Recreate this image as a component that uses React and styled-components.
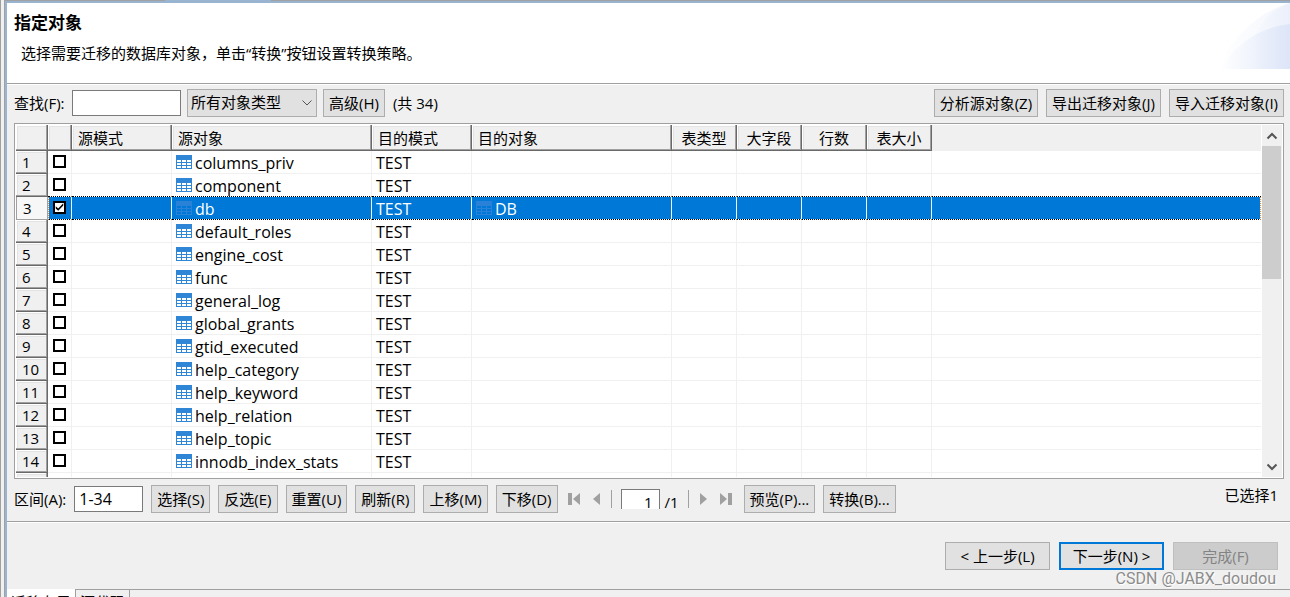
import { useState } from "react";
import styled, { createGlobalStyle, css } from "styled-components";

const names = [
  "columns_priv",
  "component",
  "db",
  "default_roles",
  "engine_cost",
  "func",
  "general_log",
  "global_grants",
  "gtid_executed",
  "help_category",
  "help_keyword",
  "help_relation",
  "help_topic",
  "innodb_index_stats",
];

const columns = [
  { label: "", width: 32 },
  { label: "", width: 24 },
  { label: "源模式", width: 100 },
  { label: "源对象", width: 200 },
  { label: "目的模式", width: 100 },
  { label: "目的对象", width: 200 },
  { label: "表类型", width: 65, center: true },
  { label: "大字段", width: 65, center: true },
  { label: "行数", width: 65, center: true },
  { label: "表大小", width: 65, center: true },
];

const TableIcon = ({ faded }) => (
  <IconSvg viewBox="0 0 16 14" aria-hidden="true">
    <rect width="16" height="14" fill={faded ? "#2a82d8" : "#2f86d6"} />
    <path
      d="M1 5h4v2H1zM6 5h4v2H6zM11 5h4v2h-4zM1 8h4v2H1zM6 8h4v2H6zM11 8h4v2h-4zM1 11h4v2H1zM6 11h4v2H6zM11 11h4v2h-4z"
      fill={faded ? "#0078d7" : "#fff"}
    />
  </IconSvg>
);

const Arrow = ({ back, bar }) => (
  <svg width="14" height="14" viewBox="0 0 14 14" aria-hidden="true">
    <g fill="#a0a0a0" transform={back ? undefined : "translate(14 0) scale(-1 1)"}>
      {bar && <path d="M1 1h4v12H1z" />}
      <path d={bar ? "M13 1v12L6 7z" : "M11 1v12L4 7z"} />
    </g>
  </svg>
);

const Chevron = ({ up }) => (
  <svg width="12" height="8" viewBox="0 0 12 8" aria-hidden="true">
    <path
      d={up ? "M1.500 6.500L6 2L10.500 6.500" : "M1.500 1.500L6 6L10.500 1.500"}
      fill="none"
      stroke="#555"
      strokeWidth="2"
    />
  </svg>
);

const Swoosh = () => (
  <SwooshSvg viewBox="0 0 72 66" aria-hidden="true">
    <defs>
      <linearGradient id="fade" x1="0" x2="1">
        <stop offset="0" stopColor="#c8d6f4" stopOpacity="0" />
        <stop offset="1" stopColor="#c8d6f4" stopOpacity="0.4" />
      </linearGradient>
      <linearGradient id="fadeLight" x1="0" x2="1">
        <stop offset="0" stopColor="#dfe7f8" stopOpacity="0" />
        <stop offset="1" stopColor="#dfe7f8" stopOpacity="0.4" />
      </linearGradient>
    </defs>
    <path d="M6 54C20 30 42 8 72 0V66H2z" fill="url(#fadeLight)" />
    <path d="M34 38C42 20 54 6 72 0V66H34z" fill="url(#fadeLight)" />
    <path d="M2 66C16 44 38 25 72 21V66z" fill="url(#fade)" />
  </SwooshSvg>
);

const App = () => {
  const [checked, setChecked] = useState([2]);

  const toggle = (i) =>
    setChecked((c) => (c.includes(i) ? c.filter((n) => n !== i) : [...c, i]));

  return (
    <>
      <GlobalStyle />
      <Frame>
        <Wizard>
          <TitleArea>
            <Title>指定对象</Title>
            <Description>
              选择需要迁移的数据库对象，单击“转换”按钮设置转换策略。
            </Description>
            <Swoosh />
          </TitleArea>

          <SearchBar>
            <Label htmlFor="find">查找(F):</Label>
            <TextInput id="find" $width={109} />
            <SelectBox>
              <Select aria-label="对象类型">
                <option>所有对象类型</option>
              </Select>
              <SelectArrow viewBox="0 0 10 6" aria-hidden="true">
                <path d="M0.500 0.500L5 5L9.500 0.500" fill="none" stroke="#555" />
              </SelectArrow>
            </SelectBox>
            <Button>高级(H)</Button>
            <Total>(共 34)</Total>
            <RightGroup>
              <Button>分析源对象(Z)</Button>
              <Button>导出迁移对象(J)</Button>
              <Button>导入迁移对象(I)</Button>
            </RightGroup>
          </SearchBar>

          <GridFrame>
            <GridView>
              <Table>
                <colgroup>
                  {columns.map((c, i) => (
                    <Col key={i} $width={c.width} />
                  ))}
                  <col />
                </colgroup>
                <thead>
                  <tr>
                    {columns.map((c, i) => (
                      <HeadCell key={i} $center={c.center}>
                        {c.label}
                      </HeadCell>
                    ))}
                    <HeadRest />
                  </tr>
                </thead>
                <tbody>
                  {names.map((name, i) => {
                    const active = i === 2;
                    return (
                      <Row key={name} $active={active} $beforeActive={i === 1}>
                        <RowHead $active={active}>{i + 1}</RowHead>
                        <CheckCell>
                          <CheckBox
                            type="checkbox"
                            aria-label={name}
                            checked={checked.includes(i)}
                            onChange={() => toggle(i)}
                          />
                        </CheckCell>
                        <Cell />
                        <Cell>
                          <TableIcon faded={active} />
                          {name}
                        </Cell>
                        <Cell>TEST</Cell>
                        <Cell>
                          {active && (
                            <>
                              <TableIcon faded />
                              DB
                            </>
                          )}
                        </Cell>
                        <Cell />
                        <Cell />
                        <Cell />
                        <Cell />
                        <LastCell />
                      </Row>
                    );
                  })}
                  {/* blank row that runs under the bottom edge */}
                  <Row>
                    <RowHead />
                    {columns.slice(1).map((c, i) => (
                      <Cell key={i} />
                    ))}
                    <LastCell />
                  </Row>
                </tbody>
              </Table>
            </GridView>
            <ScrollBar>
              <ScrollButton aria-label="向上滚动">
                <Chevron up />
              </ScrollButton>
              <Track>
                <Thumb />
              </Track>
              <ScrollButton aria-label="向下滚动">
                <Chevron />
              </ScrollButton>
            </ScrollBar>
          </GridFrame>

          <ActionBar>
            <Label htmlFor="range">区间(A):</Label>
            <TextInput id="range" $width={69} defaultValue="1-34" />
            <Button>选择(S)</Button>
            <Button>反选(E)</Button>
            <Button>重置(U)</Button>
            <Button>刷新(R)</Button>
            <Button>上移(M)</Button>
            <Button>下移(D)</Button>
            <Pager>
              <PagerButton aria-label="第一页">
                <Arrow back bar />
              </PagerButton>
              <PagerButton aria-label="前一页">
                <Arrow back />
              </PagerButton>
              <Divider />
              <PageBox>
                <PageInput aria-label="页码" defaultValue="1" />
                <PageTotal>/1</PageTotal>
              </PageBox>
              <Divider />
              <PagerButton aria-label="后一页">
                <Arrow />
              </PagerButton>
              <PagerButton aria-label="最后一页">
                <Arrow bar />
              </PagerButton>
            </Pager>
            <Button>预览(P)...</Button>
            <Button>转换(B)...</Button>
            <Selected>已选择{checked.length}</Selected>
          </ActionBar>

          <Footer>
            <WizardButton>&lt; 上一步(L)</WizardButton>
            <WizardButton $primary>下一步(N) &gt;</WizardButton>
            <WizardButton disabled>完成(F)</WizardButton>
            <Watermark>CSDN @JABX_doudou</Watermark>
          </Footer>

          <Tabs>
            <Tab $active>迁移布局</Tab>
            <Tab>源代码</Tab>
            <TabRest />
          </Tabs>
        </Wizard>
      </Frame>
    </>
  );
};

const GlobalStyle = createGlobalStyle`
  * {
    box-sizing: border-box;
  }
  body {
    margin: 0;
    overflow: hidden;
    background: #f0f0f0;
  }
  body, button, input, select {
    font-family: "Open Sans", "Noto Sans CJK SC", sans-serif;
    font-size: 15px;
    color: #000;
  }
`;

const Frame = styled.div`
  display: flex;
  height: 100vh;
  padding-left: 3px;
  border-left: 1px solid #a0a0a0;
`;

const Wizard = styled.main`
  flex: 1;
  min-width: 0;
  display: flex;
  flex-direction: column;
  padding: 3px 0 0 2px;
  border-left: 1px solid #a0a0a0;
  /* grey window edge with the blue tab above it */
  background:
    linear-gradient(#99b4d1, #99b4d1) 160px 0 / 106px 1px no-repeat,
    linear-gradient(#a0a0a0, #a0a0a0) 0 0 / 100% 1px no-repeat,
    linear-gradient(#99b4d1, #99b4d1) 0 1px / 100% 2px no-repeat,
    linear-gradient(#99b4d1, #99b4d1) 0 0 / 2px 100% no-repeat,
    #f0f0f0;
  line-height: 20px;
  white-space: nowrap;
`;

const TitleArea = styled.header`
  position: relative;
  height: 81px;
  flex: none;
  padding: 10px 7px;
  background: #fff;
  border-bottom: 1px solid #a0a0a0;
`;

const Title = styled.h1`
  margin: 0;
  font-size: 17px;
  line-height: 20px;
`;

const Description = styled.p`
  margin: 10px 0 0 7px;
`;

const SwooshSvg = styled.svg`
  position: absolute;
  top: 0;
  right: 0;
  width: 72px;
  height: 66px;
`;

const Bar = styled.div`
  display: flex;
  align-items: center;
  flex: none;
  padding: 0 6px 2px 7px;
`;

const SearchBar = styled(Bar)`
  height: 39px;
  gap: 6px;
  border-top: 1px solid #fff;
`;

const Label = styled.label`
  min-width: 52px;
`;

const Total = styled.span`
  padding-left: 2px;
`;

const TextInput = styled.input`
  width: ${(props) => props.$width}px;
  height: 26px;
  padding: 0 4px;
  border: 1px solid #7a7a7a;
  background: #fff;
  font-size: 16px;
  outline: none;
`;

const buttonFace = css`
  height: 28px;
  padding: 0 5px 2px;
  border: 1px solid #adadad;
  border-radius: 0;
  background: #e1e1e1;
`;

const Button = styled.button`
  ${buttonFace}
  flex: none;
`;

const SelectBox = styled.div`
  position: relative;
`;

const Select = styled.select`
  ${buttonFace}
  display: block;
  width: 130px;
  padding: 0 3px 2px;
  appearance: none;
`;

const SelectArrow = styled.svg`
  position: absolute;
  top: 11px;
  right: 5px;
  width: 10px;
  height: 6px;
  pointer-events: none;
`;

const RightGroup = styled.div`
  display: flex;
  gap: 8px;
  margin-left: auto;
`;

const GridFrame = styled.section`
  display: flex;
  flex: 1;
  min-height: 0;
  margin: 0 6px 0 7px;
  padding: 1px;
  border: 1px solid #a0a0a0;
  background: #fff;
`;

const GridView = styled.div`
  flex: 1;
  min-width: 0;
  overflow: hidden;
`;

const Table = styled.table`
  width: 100%;
  table-layout: fixed;
  border-spacing: 0;
`;

const Col = styled.col`
  width: ${(props) => props.$width}px;
`;

const raised = css`
  background: #f0f0f0;
  border: 0 solid #696969;
  border-width: 0 1px 1px 0;
  box-shadow: inset -1px -1px #a0a0a0, inset 1px 1px #fff, inset 2px 2px #e3e3e3;
  font-weight: 400;
`;

const HeadCell = styled.th`
  ${raised}
  height: 26px;
  padding: 0 6px;
  text-align: ${(props) => (props.$center ? "center" : "left")};
`;

const HeadRest = styled.th`
  background: #f0f0f0;
`;

const RowHead = styled.th`
  ${raised}
  height: 23px;
  padding: 0 0 0 6px;
  text-align: left;
  ${(props) =>
    props.$active &&
    css`
      padding-left: 7px;
      background: #f7f7f7;
      border-color: #a0a0a0;
      box-shadow: inset 1px 0 #a0a0a0;
    `}
`;

const Cell = styled.td`
  height: 23px;
  padding: 2px 4px 0;
  border: 0 solid #f0f0f0;
  border-width: 0 1px 1px 0;
  font-size: 16px;
  line-height: 20px;
`;

const CheckCell = styled(Cell)`
  padding: 0 5px;
`;

const LastCell = styled(Cell)`
  border-right: 0;
`;

const Row = styled.tr`
  ${(props) =>
    (props.$active || props.$beforeActive) &&
    css`
      td {
        border-bottom: 1px dotted #000;
      }
    `}
  ${(props) =>
    props.$active &&
    css`
      td {
        background: #0078d7;
        background-clip: padding-box;
        color: #fff;
      }
      ${CheckCell} {
        border-left: 1px dotted #ff8728;
        padding-left: 4px;
      }
      ${LastCell} {
        border-right: 1px dotted #ff8728;
      }
    `}
`;

const CheckBox = styled.input`
  appearance: none;
  display: grid;
  place-items: center;
  width: 13px;
  height: 13px;
  margin: 0 0 2px;
  border: 2px solid #000;
  background: #fff;

  &:checked::before {
    content: "";
    width: 9px;
    height: 9px;
    background: #000;
    clip-path: polygon(8% 42%, 36% 66%, 92% 8%, 92% 34%, 36% 92%, 8% 66%);
  }
`;

const IconSvg = styled.svg`
  width: 16px;
  height: 14px;
  margin-right: 3px;
`;

const ScrollBar = styled.div`
  display: flex;
  flex-direction: column;
  flex: none;
  width: 21px;
  padding-right: 1px;
  background: #f0f0f0;
  border-left: 1px solid #fff;
`;

const ScrollButton = styled.button`
  display: grid;
  place-items: center;
  height: 21px;
  padding: 0;
  border: 0;
  background: transparent;
`;

const Track = styled.div`
  flex: 1;
`;

const Thumb = styled.div`
  height: 43%;
  background: #cdcdcd;
`;

const ActionBar = styled(Bar)`
  height: 43px;
  gap: 8px;
  border-bottom: 1px solid #a0a0a0;
`;

const Pager = styled.div`
  display: flex;
  align-items: center;
  gap: 8px;
  padding: 0 3px 0 1px;
`;

const PagerButton = styled.button`
  display: grid;
  padding: 0;
  border: 0;
  background: transparent;
`;

const Divider = styled.span`
  width: 1px;
  height: 18px;
  background: #a0a0a0;
`;

const PageBox = styled.div`
  display: flex;
  align-items: flex-end;
  gap: 5px;
  height: 20px;
  margin: 0 1px;
`;

const PageInput = styled.input`
  width: 39px;
  height: 20px;
  padding: 5px 6px 0;
  border: 1px solid #7a7a7a;
  border-bottom: 0;
  text-align: right;
`;

const PageTotal = styled.span`
  line-height: 14px;
`;

const Selected = styled.output`
  margin-left: auto;
  padding: 0 6px 8px 0;
`;

const Footer = styled.footer`
  position: relative;
  display: flex;
  justify-content: flex-end;
  gap: 9px;
  flex: none;
  height: 67px;
  padding: 19px 12px 0;
  border-top: 1px solid #fff;
`;

const WizardButton = styled.button`
  ${buttonFace}
  width: 105px;
  ${(props) => props.$primary && "border: 2px solid #0078d7;"}

  &:disabled {
    background: #ccc;
    border-color: #bfbfbf;
    color: #838383;
  }
`;

const Watermark = styled.span`
  position: absolute;
  right: 14px;
  bottom: 0;
  color: #8c8c8c;
  font-family: Roboto, sans-serif;
  font-size: 16px;
  text-shadow: 1px 1px #fff;
`;

const Tabs = styled.nav`
  display: flex;
  align-items: flex-start;
  flex: none;
  height: 8px;
`;

const Tab = styled.button`
  flex: none;
  height: 24px;
  padding: 0 4px;
  border: 0 solid #a0a0a0;
  border-right-width: 1px;
  border-top-width: ${(props) => (props.$active ? 0 : 1)}px;
  background: ${(props) => (props.$active ? "#fff" : "#f0f0f0")};
`;

const TabRest = styled.span`
  flex: 1;
  border-top: 1px solid #a0a0a0;
`;

export default App;
